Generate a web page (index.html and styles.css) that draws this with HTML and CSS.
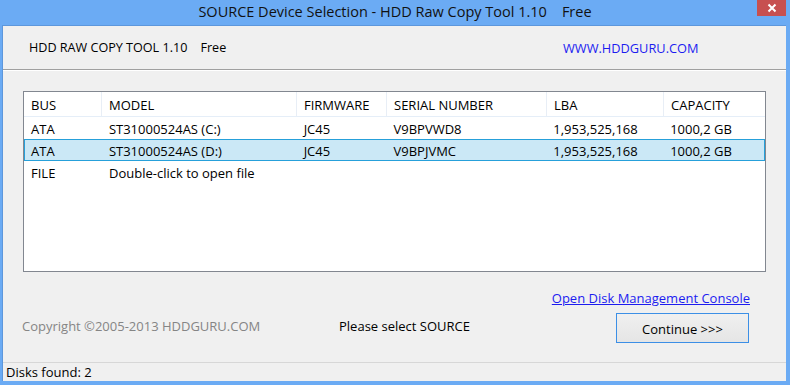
FILE: index.html
```html
<!DOCTYPE html>
<html>
<head>
<meta charset="utf-8">
<link rel="stylesheet" href="styles.css">
</head>
<body>
<div class="window">
  <div class="titlebar">
    <span class="title">SOURCE Device Selection - HDD Raw Copy Tool 1.10    Free</span>
    <div class="close"><svg width="10" height="10" viewBox="0 0 10 10"><path d="M1.5 1.5 L8.5 8.5 M8.5 1.5 L1.5 8.5" stroke="#fff" stroke-width="2" fill="none"/></svg></div>
  </div>
  <div class="client">
    <div class="header">
      <span class="appname">HDD RAW COPY TOOL 1.10    Free</span>
      <span class="site">WWW.HDDGURU.COM</span>
    </div>
    <div class="content">
      <div class="list">
        <div class="row head">
          <div class="c c1">BUS</div>
          <div class="c c2">MODEL</div>
          <div class="c c3">FIRMWARE</div>
          <div class="c c4">SERIAL NUMBER</div>
          <div class="c c5">LBA</div>
          <div class="c c6">CAPACITY</div>
        </div>
        <div class="row">
          <div class="c c1">ATA</div>
          <div class="c c2">ST31000524AS (C:)</div>
          <div class="c c3">JC45</div>
          <div class="c c4">V9BPVWD8</div>
          <div class="c c5">1,953,525,168</div>
          <div class="c c6">1000,2 GB</div>
        </div>
        <div class="row selected">
          <div class="c c1">ATA</div>
          <div class="c c2">ST31000524AS (D:)</div>
          <div class="c c3">JC45</div>
          <div class="c c4">V9BPJVMC</div>
          <div class="c c5">1,953,525,168</div>
          <div class="c c6">1000,2 GB</div>
        </div>
        <div class="row">
          <div class="c c1">FILE</div>
          <div class="c c2 wide">Double-click to open file</div>
        </div>
      </div>
      <div class="bottom">
        <div class="copyright">Copyright ©2005-2013 HDDGURU.COM</div>
        <div class="prompt">Please select SOURCE</div>
        <div class="actions">
          <a class="disklink" href="#">Open Disk Management Console</a>
          <button class="continue">Continue &gt;&gt;&gt;</button>
        </div>
      </div>
    </div>
    <div class="status">Disks found: 2</div>
  </div>
</div>
</body>
</html>
```

FILE: styles.css
```css
html, body {
  margin: 0;
  padding: 0;
}
body {
  width: 790px;
  height: 385px;
  overflow: hidden;
  font-family: "Open Sans", "Noto Sans", sans-serif;
  font-size: 13px;
  color: #000;
}
.window {
  width: 790px;
  height: 385px;
  background: #6babf4;
  display: flex;
  flex-direction: column;
  position: relative;
}
.titlebar {
  height: 25px;
  display: flex;
  align-items: center;
  justify-content: center;
}
.title {
  white-space: pre;
  font-size: 14.5px;
  color: #111;
  margin-top: -2px;
}
.close {
  position: absolute;
  top: 0;
  left: 757px;
  width: 29px;
  height: 16px;
  background: #c75050;
  display: flex;
  align-items: center;
  justify-content: center;
}
.client {
  margin: 0 4px 4px 2px;
  flex: 1;
  background: #f0f0f0;
  border-top: 1px solid #5d97dc;
  border-left: 1px solid #5d97dc;
  display: flex;
  flex-direction: column;
}
.header {
  height: 44px;
  border-bottom: 1px solid #a0a0a0;
  display: flex;
  align-items: center;
  box-sizing: border-box;
}
.appname {
  white-space: pre;
  margin-left: 26px;
  width: 534px;
  font-size: 12.6px;
}
.site {
  color: #1c1cf0;
  font-size: 12.8px;
}
.content {
  flex: 1;
  border-top: 1px solid #fff;
  display: flex;
  flex-direction: column;
}
.list {
  margin: 20px 0 0 20px;
  width: 743px;
  height: 181px;
  box-sizing: border-box;
  background: #fff;
  border: 1px solid #828790;
  display: flex;
  flex-direction: column;
}
.row {
  display: flex;
  height: 22px;
  align-items: center;
  box-sizing: border-box;
  border: 1px solid transparent;
}
.row.head {
  height: 25px;
  border: none;
  border-bottom: 1px solid #e5eef8;
  align-items: stretch;
}
.row.head .c {
  display: flex;
  align-items: center;
  border-right: 1px solid #e8eef6;
}
.row.head .c6 {
  border-right: none;
}
.row.selected {
  background: #cbe8f6;
  border-color: #26a0da;
}
.c {
  padding-left: 7px;
  padding-top: 2px;
  box-sizing: border-box;
  white-space: nowrap;
}
.c1 { width: 78px; }
.c2 { width: 195px; }
.c3 { width: 90px; }
.c4 { width: 160px; }
.c5 { width: 117px; }
.c6 { width: 101px; }
.c2.wide { width: 300px; }
.row:not(.head) .c1 { width: 77px; padding-left: 6px; }
.bottom {
  display: grid;
  grid-template-columns: 317px 1fr auto;
  align-items: end;
  padding-left: 19px;
  padding-right: 36px;
}
.copyright {
  color: #858585;
  padding-bottom: 8px;
}
.prompt {
  padding-bottom: 8px;
}
.actions {
  display: flex;
  flex-direction: column;
  align-items: flex-end;
  padding-top: 18px;
}
.disklink {
  color: #1c1cf0;
  text-decoration: underline;
  line-height: 16px;
}
.continue {
  margin-top: 7px;
  width: 133px;
  height: 30px;
  margin-right: 1px;
  font-family: inherit;
  font-size: 13px;
  color: #000;
  background: linear-gradient(#f0f0f0, #e5e5e5);
  border: 1px solid #3c8fe6;
  padding: 0;
  padding-top: 2px;
}
.status {
  margin-top: auto;
  height: 19px;
  border-top: 1px solid #d7d7d7;
  display: flex;
  align-items: center;
  padding-left: 3px;
  box-sizing: border-box;
}
```
